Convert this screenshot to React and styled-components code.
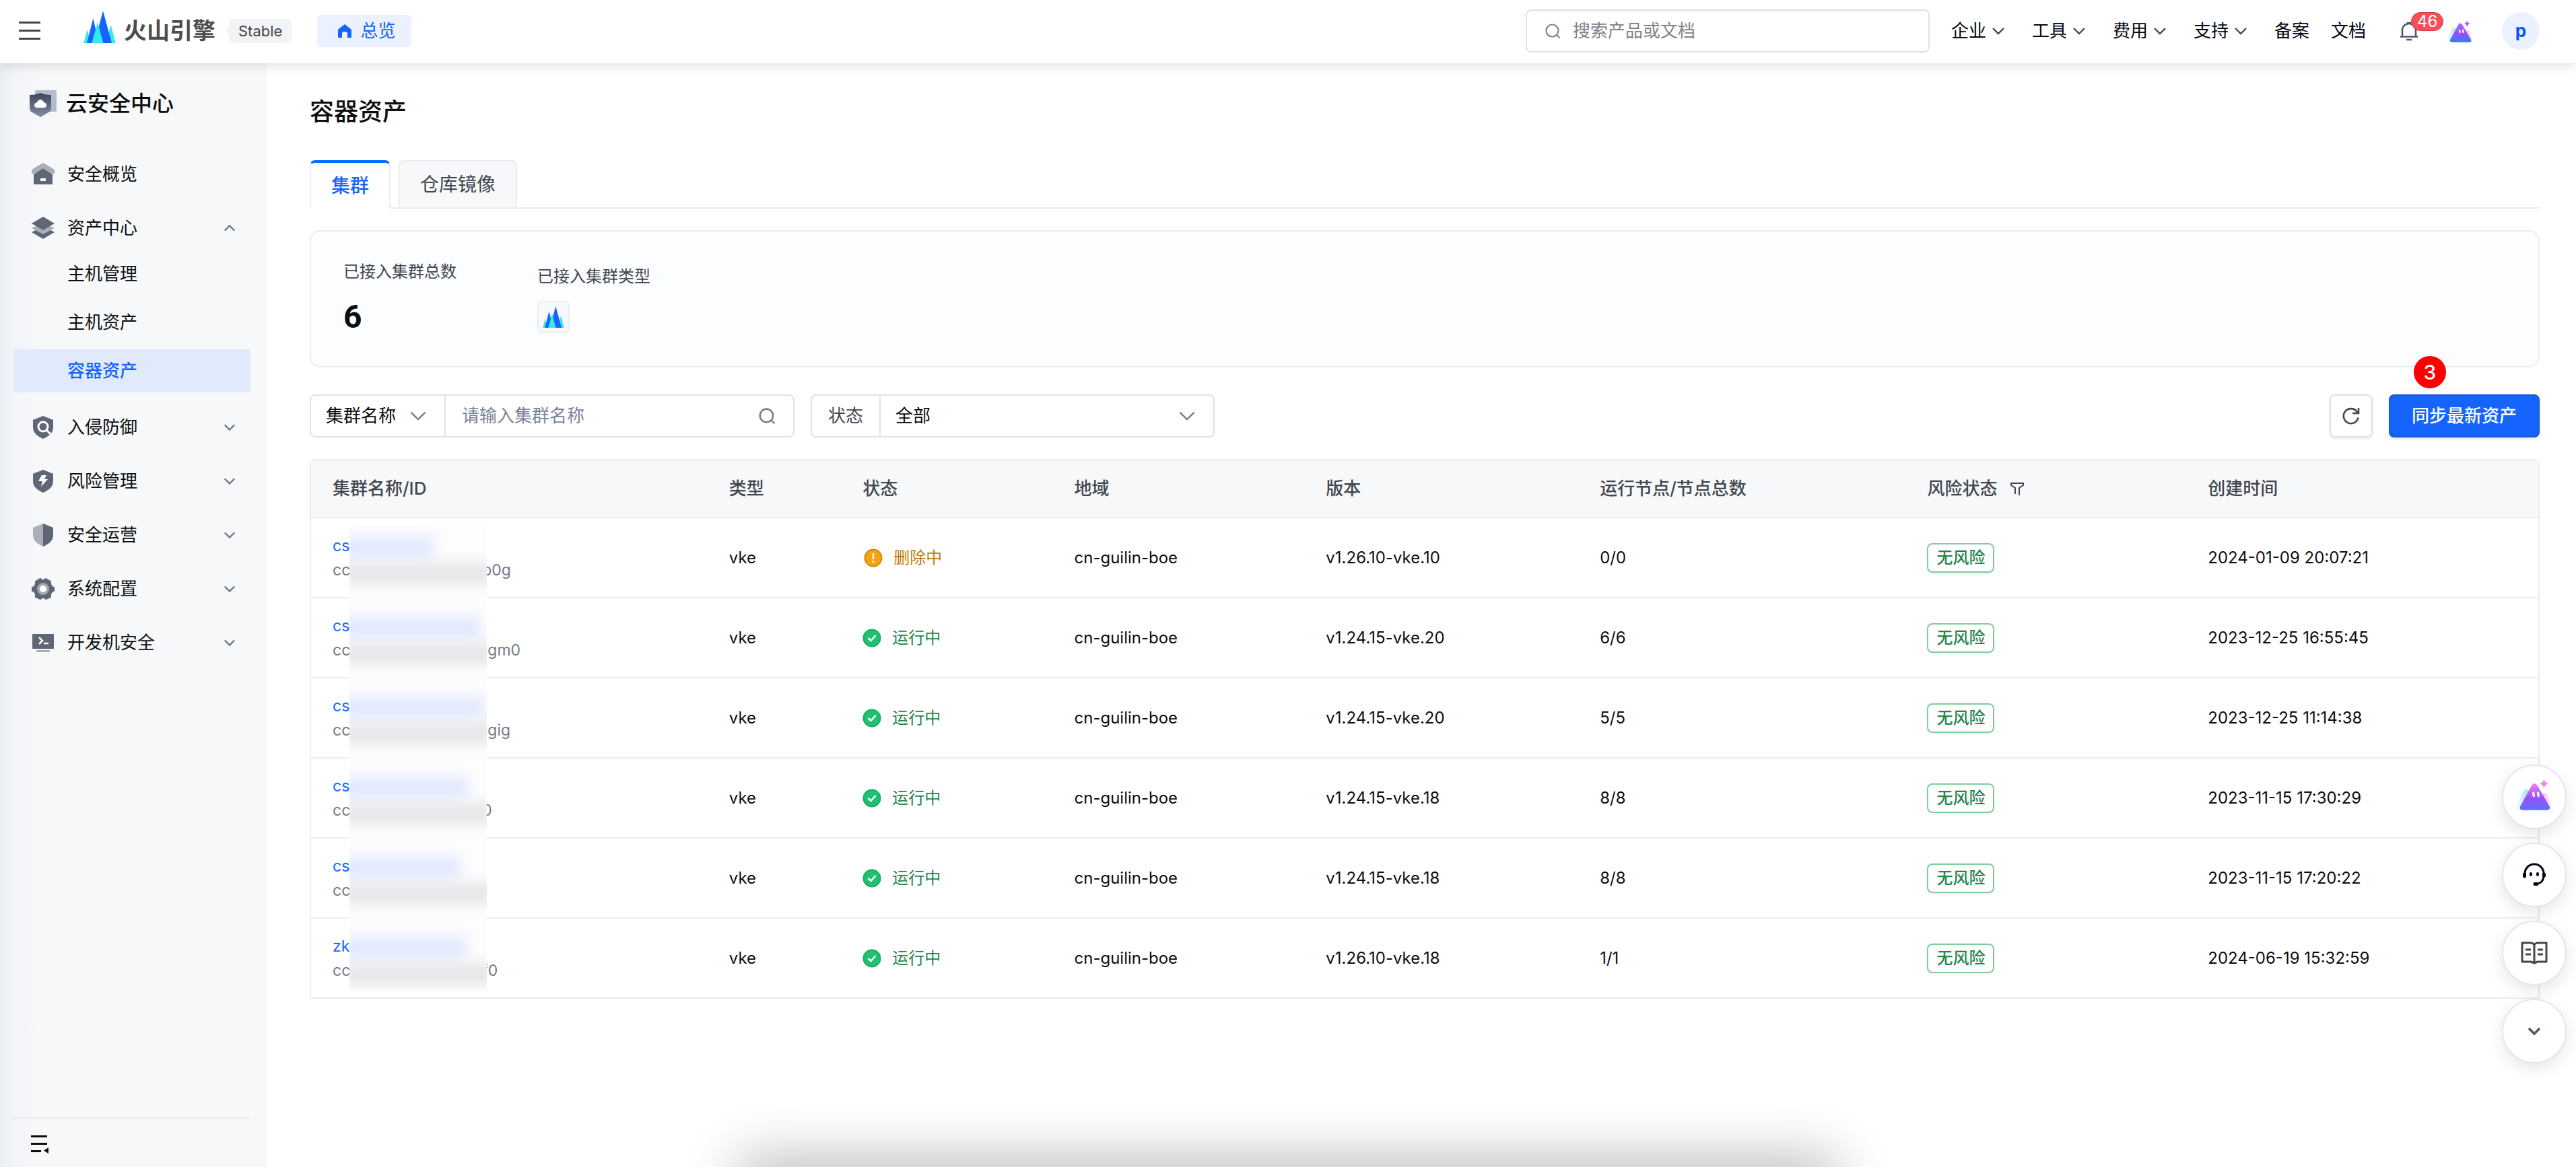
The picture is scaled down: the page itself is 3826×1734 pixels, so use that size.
import { useState } from 'react'
import styled, { createGlobalStyle, css } from 'styled-components'

const colors = {
    primary: '#1664ff',
    text: '#0c0d0e',
    secondary: '#42464e',
    muted: '#737a87',
    border: '#eaedf1',
    inputBorder: '#dde2e9',
    panel: '#f6f8fa',
    success: '#26854c',
    warning: '#c27c0b',
}

const GlobalStyle = createGlobalStyle`
    * {
        box-sizing: border-box;
    }

    body {
        margin: 0;
        background: #ffffff;
        color: ${colors.text};
        font-family: Inter, "Noto Sans CJK SC", sans-serif;
        font-size: 26px;
        line-height: 36px;
    }

    button, input, select {
        font: inherit;
        color: inherit;
    }

    button {
        padding: 0;
        border: 0;
        background: none;
        cursor: pointer;
    }

    a {
        color: inherit;
        text-decoration: none;
    }

    svg {
        display: block;
        flex: none;
    }
`

/* ---------- layout ---------- */

const Page = styled.div`
    display: flex;
    flex-direction: column;
    min-height: 100vh;
`

const Body = styled.div`
    display: flex;
    flex: 1;
`

const Main = styled.main`
    flex: 1;
    min-width: 0;
    padding: 46px 54px 80px 64px;
`

/* ---------- header ---------- */

const HeaderBar = styled.header`
    position: relative;
    z-index: 2;
    display: flex;
    align-items: center;
    height: 94px;
    padding: 0 54px 2px 28px;
    background: #ffffff;
    box-shadow: 0 4px 16px rgba(0, 0, 0, 0.12);
`

const Brand = styled.a`
    display: flex;
    align-items: center;
    gap: 12px;
    margin-left: 64px;
    color: #4d4d4d;
    font-size: 34px;
    font-weight: 700;

    svg {
        margin-bottom: 12px;
    }
`

const VersionTag = styled.span`
    position: relative;
    margin-left: 20px;
    padding: 0 14px;
    border-radius: 6px;
    background: #f2f3f5;
    color: ${colors.secondary};
    font-size: 22px;

    &::before {
        content: '';
        position: absolute;
        left: -6px;
        top: 12px;
        border: 6px solid transparent;
        border-left: 0;
        border-right-color: #f2f3f5;
    }
`

const OverviewLink = styled.a`
    display: flex;
    align-items: center;
    gap: 12px;
    height: 48px;
    margin-left: 38px;
    padding: 0 24px 0 30px;
    border-radius: 8px;
    background: #ebf1ff;
    color: ${colors.primary};
`

const GlobalSearch = styled.label`
    display: flex;
    align-items: center;
    gap: 18px;
    width: 600px;
    height: 64px;
    margin-left: auto;
    padding: 0 26px;
    border: 2px solid ${colors.inputBorder};
    border-radius: 8px;
    color: #80838a;
`

const TextInput = styled.input`
    flex: 1;
    min-width: 0;
    padding: 0;
    border: 0;
    outline: 0;
    background: none;

    &::placeholder {
        color: ${({ $soft }) => ($soft ? '#80838a' : '#7a8499')};
        opacity: 1;
    }
`

const TopNav = styled.nav`
    display: flex;
    gap: 40px;
    margin-left: 32px;
`

const TopNavButton = styled.button`
    display: flex;
    align-items: center;
    gap: 8px;
    color: #020814;
`

const TopNavLinks = styled.div`
    display: flex;
    gap: 32px;
    color: #020814;
`

const BellButton = styled.button`
    position: relative;
    margin-left: 50px;
`

const BellCount = styled.span`
    position: absolute;
    left: 17px;
    top: -13px;
    padding: 0 8px;
    border: 1px solid #d8353f;
    border-radius: 14px;
    background: #f94f58;
    color: #ffffff;
    font-size: 24px;
    line-height: 26px;
`

const AssistantButton = styled.button`
    margin-left: 42px;
`

const Avatar = styled.button`
    width: 56px;
    height: 56px;
    margin-left: 42px;
    border-radius: 50%;
    background: #ebf1ff;
    color: #0057ff;
    font-size: 26px;
    font-weight: 700;
`

/* ---------- sidebar ---------- */

const SidebarPanel = styled.aside`
    display: flex;
    flex-direction: column;
    width: 396px;
    padding: 36px 24px 0 20px;
    background: linear-gradient(90deg, #e9eef2 0, #f3f5f9 24px, #f6f8fa 60px);
`

const SidebarTitle = styled.h2`
    display: flex;
    align-items: center;
    gap: 14px;
    margin: 0;
    padding-left: 24px;
    font-size: 32px;
    font-weight: 500;
    line-height: 48px;
`

const SideNav = styled.nav`
    display: flex;
    flex-direction: column;
    gap: 8px;
    margin-top: 45px;
`

const SideGroup = styled.div`
    display: flex;
    flex-direction: column;
`

const SideItem = styled.button`
    display: flex;
    align-items: center;
    gap: 16px;
    height: 72px;
    padding: 0 22px 0 24px;
    text-align: left;

    span {
        flex: 1;
    }
`

const SubItems = styled.div`
    display: flex;
    flex-direction: column;
    gap: 8px;
    padding-bottom: 8px;
`

const SubItem = styled.a`
    padding: 14px 80px;
    border-radius: 4px;

    ${({ $active }) =>
        $active &&
        css`
            background: #e1eafa;
            color: ${colors.primary};
            font-weight: 500;
        `}
`

const SidebarFooter = styled.div`
    display: flex;
    margin-top: auto;
    padding: 24px 24px 20px;
    border-top: 2px solid ${colors.border};
`

/* ---------- content ---------- */

const PageTitle = styled.h1`
    margin: 0;
    font-size: 36px;
    font-weight: 500;
    line-height: 52px;
`

const Tabs = styled.div`
    display: flex;
    gap: 12px;
    margin-top: 46px;
    border-bottom: 2px solid ${colors.border};
`

const Tab = styled.button`
    height: 70px;
    padding: 0 30px;
    border: 2px solid ${colors.border};
    border-bottom: 0;
    border-radius: 8px 8px 0 0;
    background: ${colors.panel};
    color: ${colors.secondary};
    font-size: 28px;

    ${({ $active }) =>
        $active &&
        css`
            height: 72px;
            margin-bottom: -2px;
            border-top: 4px solid #006eff;
            background: #ffffff;
            color: ${colors.primary};
            font-weight: 500;
        `}
`

const Summary = styled.section`
    display: flex;
    align-items: center;
    gap: 120px;
    margin-top: 32px;
    padding: 42px 48px;
    border: 2px solid ${colors.border};
    border-radius: 16px;
    background: #fcfdff;
`

const Stat = styled.div`
    display: flex;
    flex-direction: column;
    align-items: flex-start;
    gap: 18px;
    color: ${colors.secondary};
    font-size: 24px;
`

const StatValue = styled.strong`
    color: ${colors.text};
    font-family: Roboto, sans-serif;
    font-size: 48px;
    font-weight: 700;
    line-height: 62px;
`

const TypeBox = styled.span`
    display: grid;
    place-items: center;
    width: 48px;
    height: 48px;
    border: 2px solid ${colors.border};
    border-radius: 8px;
    background: ${colors.panel};
`

const Toolbar = styled.div`
    display: flex;
    gap: 24px;
    margin-top: 40px;
`

const FieldGroup = styled.div`
    display: flex;
    width: ${({ $width }) => $width};
    height: 64px;
    border: 2px solid ${colors.inputBorder};
    border-radius: 8px;
    color: ${colors.text};
`

const SelectBox = styled.div`
    display: grid;
    flex: ${({ $grow }) => ($grow ? 1 : 'none')};
    align-items: center;
    width: 198px;

    > * {
        grid-area: 1 / 1;
    }

    svg {
        justify-self: end;
        margin-right: 26px;
        pointer-events: none;
    }
`

const Select = styled.select`
    width: 100%;
    height: 100%;
    padding: 0 22px;
    border: 0;
    outline: 0;
    appearance: none;
    background: none;
`

const KeywordField = styled.label`
    display: flex;
    flex: 1;
    align-items: center;
    padding: 0 26px 0 24px;
    border-left: 2px solid ${colors.inputBorder};
    color: ${colors.muted};
`

const FieldLabel = styled.label`
    display: flex;
    align-items: center;
    padding: 0 24px;
    border-right: 2px solid ${colors.inputBorder};
    color: ${colors.secondary};
`

const Actions = styled.div`
    display: flex;
    gap: 24px;
    margin-left: auto;
`

const RefreshButton = styled.button`
    display: grid;
    place-items: center;
    width: 64px;
    height: 64px;
    border: 2px solid ${colors.inputBorder};
    border-radius: 8px;
    color: ${colors.secondary};
    box-shadow: 0 2px 4px rgba(0, 0, 0, 0.08);
`

const SyncButton = styled.button`
    position: relative;
    height: 64px;
    padding: 0 32px;
    border: 2px solid #1558d9;
    border-radius: 8px;
    background: ${colors.primary};
    color: #ffffff;
    font-weight: 500;
    box-shadow: 0 2px 4px rgba(0, 0, 0, 0.12);
`

const StepBadge = styled.span`
    position: absolute;
    left: 35px;
    top: -59px;
    width: 48px;
    border-radius: 50%;
    background: #ff0000;
    font-size: 30px;
    line-height: 48px;
    text-align: center;
`

/* ---------- table ---------- */

const TableFrame = styled.div`
    margin-top: 32px;
    border: 2px solid ${colors.border};
    border-bottom: 0;
    border-radius: 8px 8px 0 0;
`

const Table = styled.table`
    width: 100%;
    table-layout: fixed;
    border-collapse: separate;
    border-spacing: 0;
    text-align: left;
`

const Th = styled.th`
    width: ${({ $width }) => $width};
    height: 86px;
    padding: 0 32px;
    border-bottom: 2px solid ${colors.border};
    background: ${colors.panel};
    color: ${colors.secondary};
    font-weight: 500;
`

const Td = styled.td`
    position: relative;
    height: 119px;
    padding: 0 32px;
    border-bottom: 2px solid ${colors.border};
    font-size: 24px;
`

const HeadCell = styled.span`
    display: flex;
    align-items: center;
    gap: 20px;
`

const ClusterName = styled.a`
    display: block;
    color: ${colors.primary};
    font-size: 23px;
`

const ClusterId = styled.span`
    display: flex;
    color: ${colors.muted};
    font-size: 23px;
`

const IdTail = styled.span`
    margin-left: ${({ $clipped }) => ($clipped ? '196px' : '204px')};
`

const Mask = styled.span`
    position: absolute;
    left: 57px;
    top: ${({ $edge }) => ($edge === 'first' ? '12px' : '0')};
    bottom: ${({ $edge }) => ($edge === 'last' ? '10px' : '-2px')};
    width: 204px;
    padding-top: ${({ $edge }) => ($edge === 'first' ? '16px' : '28px')};
    overflow: hidden;
    background: #fdfdfe;
`

const Smudge = styled.span`
    display: block;
    width: ${({ $width }) => $width}px;
    height: 32px;
    margin: 0 0 6px -12px;
    background: ${({ $color }) => $color};
    filter: blur(10px);
`

const Status = styled.span`
    display: flex;
    align-items: center;
    gap: 16px;
    padding-left: ${({ $warn }) => ($warn ? '2px' : '0')};
    color: ${({ $warn }) => ($warn ? colors.warning : colors.success)};
    font-size: 24px;
`

const RiskTag = styled.span`
    display: inline-block;
    padding: 0 12px;
    border: 2px solid #7dcf96;
    border-radius: 8px;
    color: ${colors.success};
    font-size: 24px;
    font-weight: 500;
    line-height: 40px;
    box-shadow: 0 2px 4px rgba(0, 0, 0, 0.06);
`

/* ---------- floating parts ---------- */

const FloatingTools = styled.div`
    position: fixed;
    right: 14px;
    bottom: 154px;
    z-index: 3;
    display: flex;
    flex-direction: column;
    gap: 20px;
`

const RoundButton = styled.button`
    display: grid;
    place-items: center;
    width: 96px;
    height: 96px;
    padding-bottom: ${({ $raised }) => ($raised ? '8px' : '0')};
    border: 2px solid #e4e6ef;
    border-radius: 50%;
    background: #ffffff;
    color: ${colors.secondary};
    box-shadow: 0 8px 24px rgba(0, 0, 0, 0.1);
`

const BottomShade = styled.div`
    position: fixed;
    left: 29%;
    right: 29%;
    bottom: -40px;
    height: 40px;
    box-shadow: 0 0 80px 12px rgba(0, 0, 0, 0.3);
    pointer-events: none;
`

/* ---------- icons ---------- */

const Chevron = ({ size = 20, up, width = 2, color = '#42464e' }) => (
    <svg width={size} height={size} viewBox="0 0 20 20" fill="none" stroke={color} strokeWidth={width}>
        <path d={up ? 'M2 14l8-8 8 8' : 'M2 6l8 8 8-8'} />
    </svg>
)

const SearchIcon = ({ size = 24 }) => (
    <svg width={size} height={size} viewBox="0 0 24 24" fill="none" stroke="currentColor" strokeWidth="2.2">
        <circle cx="11.5" cy="11.5" r="9" />
        <path d="M18 18l4.500 4.500" />
    </svg>
)

const MountainLogo = ({ size }) => (
    <svg width={size} height={size} viewBox="312 47 142 144">
        <path fill="#33eae6" d="M312 191l16-61 16 61zM410 191l23-81 21 81z" />
        <path fill="#1664ff" d="M326 191l28-110 26 110zM360 191l38-144 39 144z" />
        <path fill="#33eae6" d="M348 191l26-94 25 94z" />
    </svg>
)

const Mascot = ({ id, width, height, top, bottom }) => (
    <svg width={width} height={height} viewBox="0 0 170 146">
        <defs>
            <linearGradient id={id} x1="0" y1="0" x2="0" y2="1">
                <stop offset="0" stopColor={top} />
                <stop offset="0.55" stopColor="#9a50fb" />
                <stop offset="1" stopColor={bottom} />
            </linearGradient>
            <linearGradient id={`${id}-left`} x1="0" y1="0" x2="0" y2="1">
                <stop offset="0" stopColor="#a8e8fb" />
                <stop offset="1" stopColor="#a8e8fb" stopOpacity="0.1" />
            </linearGradient>
            <linearGradient id={`${id}-right`} x1="0" y1="0" x2="0" y2="1">
                <stop offset="0" stopColor="#ffc4f2" />
                <stop offset="1" stopColor="#ffc4f2" stopOpacity="0.1" />
            </linearGradient>
        </defs>
        <path fill={`url(#${id}-left)`} d="M37 58q12-14 24 0l30 76q2 10-8 10H10q-13 0-8-12z" />
        <path fill={`url(#${id}-right)`} d="M120 74q11-12 22 0l26 60q3 10-8 10H90z" />
        <path fill={`url(#${id})`} d="M74 32q12-16 24 0l56 96q6 16-10 17H34q-20-1-12-18z" />
        <path fill={top} d="M129 4q3 19 22 22-19 3-22 22-3-19-22-22 19-3 22-22z" />
        <path stroke="#ffffff" strokeWidth="10" strokeLinecap="round" d="M81 68l2 13M102 68l2 13" />
    </svg>
)

const MenuIcon = () => (
    <svg width="32" height="30" viewBox="0 0 32 30" fill="#42464e">
        <path d="M0 1h32v3H0zM0 13h32v3H0zM0 25h32v3H0z" />
    </svg>
)

const HomeIcon = () => (
    <svg width="22" height="22" viewBox="0 0 22 22" fill="currentColor">
        <path d="M11 1l10 8v11q0 1-1 1h-5v-7q0-2-4-2t-4 2v7H2q-1 0-1-1V9z" />
    </svg>
)

const BellIcon = () => (
    <svg width="28" height="30" viewBox="0 0 28 30" fill="none" stroke="#4e5969" strokeWidth="2.600">
        <path d="M4 23V14a10 10 0 0120 0v9M1 23.500h26M10 28h8M11 3h6" />
    </svg>
)

const ProductIcon = () => (
    <svg width="40" height="40" viewBox="0 0 40 40">
        <defs>
            <linearGradient id="product" x1="0" y1="0" x2="0" y2="1">
                <stop offset="0" stopColor="#3d4657" />
                <stop offset="1" stopColor="#838da3" />
            </linearGradient>
        </defs>
        <rect x="8" width="32" height="32" rx="2" fill="#b3bccb" />
        <path fill="url(#product)" d="M0 7q10 0 16-3 6 3 16 3v20q0 4-4 6l-12 7-12-7q-4-2-4-6z" />
        <path fill="#ffffff" d="M10 26q-3-1-3-4t4-4q2-4 5-4t5 4q4 1 4 4t-3 4z" />
    </svg>
)

const SHIELD = 'M18 1l15 6v11c0 8-6 13-15 17C9 31 3 26 3 18V7z'

const SideIcon = ({ name }) => (
    <svg width="40" height="36" viewBox="-2 0 40 36" fill="#5f6675">
        {name === 'home' && (
            <>
                <path fill="#abaeb6" d="M18 1l17 10v6h-4L18 9 5 17H1v-6z" />
                <path d="M18 9l14 9v14q0 1-1 1H5q-1 0-1-1V18z" />
                <path fill="#ffffff" d="M14 24h8v4h-8z" />
            </>
        )}
        {name === 'layers' && (
            <>
                <path d="M18 15l17 9-17 10L1 24z" />
                <path fill="#abaeb6" d="M18 10l17 8-17 9L1 18z" />
                <path d="M18 1l17 10-17 10L1 11z" />
            </>
        )}
        {name === 'search' && (
            <>
                <path d={SHIELD} />
                <circle cx="18" cy="17" r="7" fill="none" stroke="#ffffff" strokeWidth="3" />
                <path fill="none" stroke="#ffffff" strokeWidth="3" d="M23 22l6 6" />
            </>
        )}
        {name === 'bolt' && (
            <>
                <path d={SHIELD} />
                <path fill="#ffffff" d="M16 9h7l-3 6h5L15 26l2-8h-6z" />
            </>
        )}
        {name === 'shield' && (
            <>
                <path fill="#abaeb6" d={SHIELD} />
                <path d="M18 1l15 6v11c0 8-6 13-15 17z" />
            </>
        )}
        {name === 'gear' && (
            <>
                <path
                    stroke="#5f6675"
                    strokeWidth="2"
                    strokeLinejoin="round"
                    d="M12 4l2-1 2 2h4l2-2 7 4v4l2 4 3 1v5l-3 1-2 4v4l-7 3-2-2h-4l-2 2-7-3v-4l-2-4-3-1v-5l3-1 2-4V7z"
                />
                <circle cx="18" cy="18" r="9" fill="#a3a9b5" />
                <circle cx="18" cy="18" r="5" fill="#ffffff" />
            </>
        )}
        {name === 'terminal' && (
            <>
                <rect x="2" y="5" width="32" height="22" rx="1" />
                <rect x="8" y="29" width="20" height="3" rx="1" fill="#a3adbc" />
                <path fill="none" stroke="#ffffff" strokeWidth="2.500" d="M12 10l5 5-5 5M19 19h7" />
            </>
        )}
    </svg>
)

const CollapseIcon = () => (
    <svg width="30" height="28" viewBox="0 0 30 28" fill="#0c0d0e">
        <path d="M2 1h24v3H2zM2 12h24v3H2zM2 23h15v3H2zM28 19v9l-7-4.500z" />
    </svg>
)

const RefreshIcon = () => (
    <svg width="28" height="28" viewBox="0 0 28 28" fill="none" stroke="currentColor" strokeWidth="2.600">
        <path d="M24.500 16.500A11 11 0 1122.500 7.500l2 2.500M25 2v8h-9" />
    </svg>
)

const FilterIcon = () => (
    <svg width="20" height="20" viewBox="0 0 20 20" fill="none" stroke="#42464e" strokeWidth="2">
        <path d="M7 18V9L1 5V2h18v3l-6 4v11" />
    </svg>
)

const StatusIcon = ({ warn }) => (
    <svg width="28" height="28" viewBox="0 0 28 28" fill="none">
        <circle cx="14" cy="14" r="12.500" fill={warn ? '#f5a312' : '#20c073'} stroke={warn ? '#d28b0c' : '#1cab63'} strokeWidth="2" />
        <path
            stroke="#ffffff"
            strokeWidth="2.500"
            d={warn ? 'M14 7v9M14 18v3' : 'M8.500 14l4 4 7-8'}
        />
    </svg>
)

const HeadsetIcon = () => (
    <svg width="36" height="36" viewBox="0 0 36 36" fill="none" stroke="#020814" strokeWidth="3">
        <path d="M4 19V16a14 14 0 0128 0v3c0 7-4 12-11 12" />
        <path strokeWidth="5" strokeLinecap="round" d="M3.500 17v3M32.500 17v2M19 31.500h3" />
        <path strokeWidth="4" strokeLinecap="round" d="M13 16v2M23 16v2" />
    </svg>
)

const BookIcon = () => (
    <svg width="40" height="36" viewBox="0 0 40 36" fill="none" stroke="currentColor" strokeWidth="3">
        <path strokeLinejoin="round" d="M20 6q-2-3-5-3H2v28h13l5 2 5-2h13V3H25q-3 0-5 3zM20 6v27" />
        <path d="M7 13h8M7 20h8M25 13h8M25 20h8" />
    </svg>
)

/* ---------- data ---------- */

const menu = [
    { label: '安全概览', icon: 'home' },
    { label: '资产中心', icon: 'layers', children: ['主机管理', '主机资产', '容器资产'] },
    { label: '入侵防御', icon: 'search', expandable: true },
    { label: '风险管理', icon: 'bolt', expandable: true },
    { label: '安全运营', icon: 'shield', expandable: true },
    { label: '系统配置', icon: 'gear', expandable: true },
    { label: '开发机安全', icon: 'terminal', expandable: true },
]

const columns = [
    ['集群名称/ID', '17.8%'],
    ['类型', '6%'],
    ['状态', '9.5%'],
    ['地域', '11.3%'],
    ['版本', '12.3%'],
    ['运行节点/节点总数', '14.7%'],
    ['风险状态', '12.6%'],
    ['创建时间', '15.8%'],
]

const clusters = [
    { name: 'cs', tail: 'b0g', clipped: true, smudge: 138, warn: true, version: 'v1.26.10-vke.10', nodes: '0/0', created: '2024-01-09 20:07:21' },
    { name: 'cs', tail: 'gm0', smudge: 206, version: 'v1.24.15-vke.20', nodes: '6/6', created: '2023-12-25 16:55:45' },
    { name: 'cs', tail: 'gig', smudge: 212, version: 'v1.24.15-vke.20', nodes: '5/5', created: '2023-12-25 11:14:38' },
    { name: 'cs', tail: '0', clipped: true, smudge: 188, version: 'v1.24.15-vke.18', nodes: '8/8', created: '2023-11-15 17:30:29' },
    { name: 'cs', tail: '', smudge: 176, version: 'v1.24.15-vke.18', nodes: '8/8', created: '2023-11-15 17:20:22' },
    { name: 'zk', tail: 'f0', clipped: true, smudge: 186, version: 'v1.26.10-vke.18', nodes: '1/1', created: '2024-06-19 15:32:59' },
]

/* ---------- components ---------- */

function Header() {
    return (
        <HeaderBar>
            <button aria-label="菜单"><MenuIcon /></button>
            <Brand href="#">
                <MountainLogo size={48} />
                火山引擎
            </Brand>
            <VersionTag>Stable</VersionTag>
            <OverviewLink href="#">
                <HomeIcon />
                总览
            </OverviewLink>
            <GlobalSearch>
                <SearchIcon />
                <TextInput $soft aria-label="搜索" placeholder="搜索产品或文档" />
            </GlobalSearch>
            <TopNav>
                {['企业', '工具', '费用', '支持'].map((label) => (
                    <TopNavButton key={label}>
                        {label}
                        <Chevron width={2.4} />
                    </TopNavButton>
                ))}
                <TopNavLinks>
                    <a href="#">备案</a>
                    <a href="#">文档</a>
                </TopNavLinks>
            </TopNav>
            <BellButton aria-label="消息">
                <BellIcon />
                <BellCount>46</BellCount>
            </BellButton>
            <AssistantButton aria-label="助手">
                <Mascot id="mascot-small" width={40} height={34} top="#a06cf8" bottom="#2f7dff" />
            </AssistantButton>
            <Avatar>p</Avatar>
        </HeaderBar>
    )
}

function Sidebar() {
    return (
        <SidebarPanel>
            <SidebarTitle>
                <ProductIcon />
                云安全中心
            </SidebarTitle>
            <SideNav>
                {menu.map(({ label, icon, children, expandable }) => (
                    <SideGroup key={label}>
                        <SideItem>
                            <SideIcon name={icon} />
                            <span>{label}</span>
                            {(children || expandable) && (
                                <Chevron size={18} up={Boolean(children)} width={2.6} color={colors.muted} />
                            )}
                        </SideItem>
                        {children && (
                            <SubItems>
                                {children.map((child) => (
                                    <SubItem key={child} href="#" $active={child === '容器资产'}>
                                        {child}
                                    </SubItem>
                                ))}
                            </SubItems>
                        )}
                    </SideGroup>
                ))}
            </SideNav>
            <SidebarFooter>
                <button aria-label="收起"><CollapseIcon /></button>
            </SidebarFooter>
        </SidebarPanel>
    )
}

function Filters() {
    return (
        <Toolbar>
            <FieldGroup $width="720px">
                <SelectBox>
                    <Select aria-label="搜索字段">
                        <option>集群名称</option>
                    </Select>
                    <Chevron size={26} width={1.8} color={colors.muted} />
                </SelectBox>
                <KeywordField>
                    <TextInput aria-label="集群名称" placeholder="请输入集群名称" />
                    <SearchIcon size={26} />
                </KeywordField>
            </FieldGroup>
            <FieldGroup $width="600px">
                <FieldLabel htmlFor="status">状态</FieldLabel>
                <SelectBox $grow>
                    <Select id="status">
                        <option>全部</option>
                    </Select>
                    <Chevron size={26} width={1.8} color={colors.muted} />
                </SelectBox>
            </FieldGroup>
            <Actions>
                <RefreshButton aria-label="刷新"><RefreshIcon /></RefreshButton>
                <SyncButton>
                    同步最新资产
                    <StepBadge>3</StepBadge>
                </SyncButton>
            </Actions>
        </Toolbar>
    )
}

function ClusterTable() {
    const edgeOf = (index) => {
        if (index === 0) return 'first'
        return index === clusters.length - 1 ? 'last' : undefined
    }

    return (
        <TableFrame>
            <Table>
                <thead>
                    <tr>
                        {columns.map(([label, width]) => (
                            <Th key={label} $width={width}>
                                <HeadCell>
                                    {label}
                                    {label === '风险状态' && <FilterIcon />}
                                </HeadCell>
                            </Th>
                        ))}
                    </tr>
                </thead>
                <tbody>
                    {clusters.map((cluster, index) => (
                        <tr key={cluster.created}>
                            <Td>
                                <ClusterName href="#">{cluster.name}</ClusterName>
                                <ClusterId>
                                    cc
                                    <IdTail $clipped={cluster.clipped}>{cluster.tail}</IdTail>
                                </ClusterId>
                                <Mask $edge={edgeOf(index)}>
                                    <Smudge $width={cluster.smudge} $color="#e0e7ff" />
                                    <Smudge $width={228} $color="#e6e6e8" />
                                </Mask>
                            </Td>
                            <Td>vke</Td>
                            <Td>
                                <Status $warn={cluster.warn}>
                                    <StatusIcon warn={cluster.warn} />
                                    {cluster.warn ? '删除中' : '运行中'}
                                </Status>
                            </Td>
                            <Td>cn-guilin-boe</Td>
                            <Td>{cluster.version}</Td>
                            <Td>{cluster.nodes}</Td>
                            <Td><RiskTag>无风险</RiskTag></Td>
                            <Td>{cluster.created}</Td>
                        </tr>
                    ))}
                </tbody>
            </Table>
        </TableFrame>
    )
}

function App() {
    const [tab, setTab] = useState('集群')

    return (
        <Page>
            <GlobalStyle />
            <Header />
            <Body>
                <Sidebar />
                <Main>
                    <PageTitle>容器资产</PageTitle>
                    <Tabs role="tablist">
                        {['集群', '仓库镜像'].map((label) => (
                            <Tab
                                key={label}
                                role="tab"
                                aria-selected={tab === label}
                                $active={tab === label}
                                onClick={() => setTab(label)}
                            >
                                {label}
                            </Tab>
                        ))}
                    </Tabs>
                    <Summary>
                        <Stat>
                            已接入集群总数
                            <StatValue>6</StatValue>
                        </Stat>
                        <Stat>
                            已接入集群类型
                            <TypeBox><MountainLogo size={32} /></TypeBox>
                        </Stat>
                    </Summary>
                    <Filters />
                    <ClusterTable />
                </Main>
            </Body>
            <FloatingTools>
                <RoundButton $raised aria-label="智能助手">
                    <Mascot id="mascot-large" width={56} height={48} top="#f183f5" bottom="#5b70ff" />
                </RoundButton>
                <RoundButton aria-label="客服"><HeadsetIcon /></RoundButton>
                <RoundButton aria-label="文档"><BookIcon /></RoundButton>
                <RoundButton aria-label="收起"><Chevron size={20} width={3.6} color="#4e5969" /></RoundButton>
            </FloatingTools>
            <BottomShade />
        </Page>
    )
}

export default App
